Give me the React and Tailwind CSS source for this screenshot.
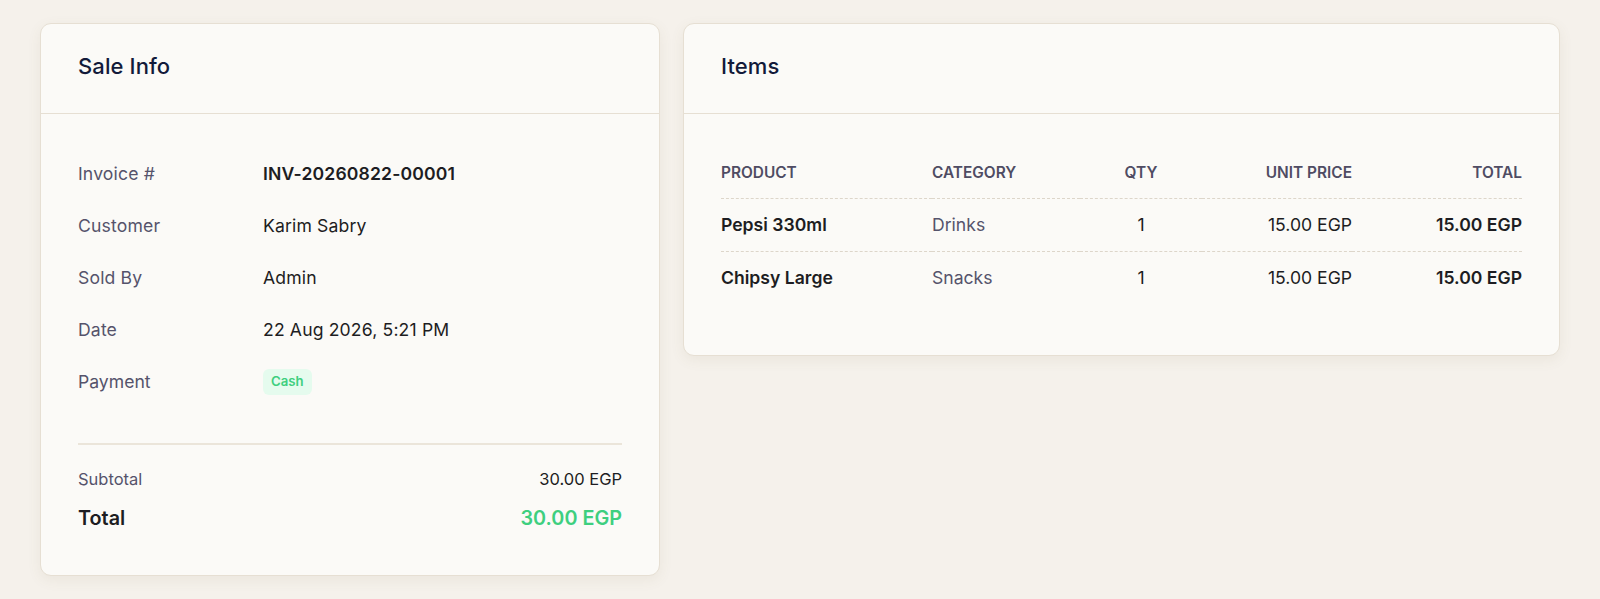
const sale = [
  { label: 'Invoice #', value: 'INV-20260822-00001', strong: true },
  { label: 'Customer', value: 'Karim Sabry' },
  { label: 'Sold By', value: 'Admin' },
  { label: 'Date', value: '22 Aug 2026, 5:21 PM' },
]

const items = [
  { product: 'Pepsi 330ml', category: 'Drinks', qty: 1, price: '15.00 EGP', total: '15.00 EGP' },
  { product: 'Chipsy Large', category: 'Snacks', qty: 1, price: '15.00 EGP', total: '15.00 EGP' },
]

function Card({ title, children }) {
  return (
    <div className="overflow-hidden rounded-[11px] border border-[#e6dfd3] bg-[#fbfaf7] shadow-[0_4px_14px_rgba(120,100,70,0.08)]">
      <div className="flex h-[90px] items-center border-b border-[#e6dfd3] px-[37px] pb-[4px]">
        <h2 className="text-[22px] font-medium tracking-[0.1px] text-[#121a3a]">{title}</h2>
      </div>
      {children}
    </div>
  )
}

export default function App() {
  return (
    <div
      className="min-h-screen bg-[#f5f1eb] px-[40px] pt-[23px] pb-[24px]"
      style={{ fontFamily: 'Inter, "Noto Sans", sans-serif' }}
    >
      <div className="grid grid-cols-[620px_1fr] items-start gap-[23px]">
        <Card title="Sale Info">
          <div className="px-[37px] pt-[34px] pb-[43px]">
            {sale.map((r) => (
              <div key={r.label} className="flex h-[52px] items-center text-[17.6px] tracking-[0.15px]">
                <span className="w-[185px] text-[#55536b]">{r.label}</span>
                <span className={r.strong ? 'font-semibold text-[#1d1d22]' : 'text-[#1d1d22]'}>
                  {r.value}
                </span>
              </div>
            ))}
            <div className="flex h-[52px] items-center text-[17.6px]">
              <span className="w-[185px] text-[#55536b]">Payment</span>
              <span className="rounded-[6px] bg-[#e5fbee] px-[8px] py-[3px] text-[13.2px] font-semibold text-[#3ecf7f]">
                Cash
              </span>
            </div>
            <div className="mt-[35px] border-t-2 border-[#ebe5da] pt-[23px]">
              <div className="flex items-center justify-between text-[16.5px] leading-[22px]">
                <span className="text-[#55536b]">Subtotal</span>
                <span className="text-[#1d1d22]">30.00 EGP</span>
              </div>
              <div className="mt-[14px] flex items-center justify-between text-[19.8px] font-semibold leading-[28px]">
                <span className="text-[#1d1d22]">Total</span>
                <span className="text-[#3ecf7f]">30.00 EGP</span>
              </div>
            </div>
          </div>
        </Card>

        <Card title="Items">
          <div className="px-[37px] pt-[33px] pb-[50px]">
            <table className="w-full table-fixed border-separate border-spacing-0">
              <colgroup>
                <col className="w-[211px]" />
                <col className="w-[148px]" />
                <col className="w-[122px]" />
                <col className="w-[150px]" />
                <col className="w-[170px]" />
              </colgroup>
              <thead>
                <tr className="text-[15.4px] font-semibold uppercase text-[#4f4c63]">
                  <th className="h-[52px] border-b border-dashed border-[#ddd6ca] text-left font-semibold">Product</th>
                  <th className="h-[52px] border-b border-dashed border-[#ddd6ca] text-left font-semibold">Category</th>
                  <th className="h-[52px] border-b border-dashed border-[#ddd6ca] text-center font-semibold">Qty</th>
                  <th className="h-[52px] border-b border-dashed border-[#ddd6ca] text-right font-semibold">Unit Price</th>
                  <th className="h-[52px] border-b border-dashed border-[#ddd6ca] text-right font-semibold">Total</th>
                </tr>
              </thead>
              <tbody className="text-[17.6px]">
                {items.map((it, i) => {
                  const line = i < items.length - 1 ? 'border-b border-dashed border-[#ddd6ca]' : ''
                  return (
                    <tr key={it.product}>
                      <td className={`h-[53px] font-semibold text-[#1d1d22] ${line}`}>{it.product}</td>
                      <td className={`h-[53px] text-[#55536b] ${line}`}>{it.category}</td>
                      <td className={`h-[53px] text-center text-[#1d1d22] ${line}`}>{it.qty}</td>
                      <td className={`h-[53px] text-right text-[#1d1d22] ${line}`}>{it.price}</td>
                      <td className={`h-[53px] text-right font-semibold text-[#1d1d22] ${line}`}>{it.total}</td>
                    </tr>
                  )
                })}
              </tbody>
            </table>
          </div>
        </Card>
      </div>
    </div>
  )
}
